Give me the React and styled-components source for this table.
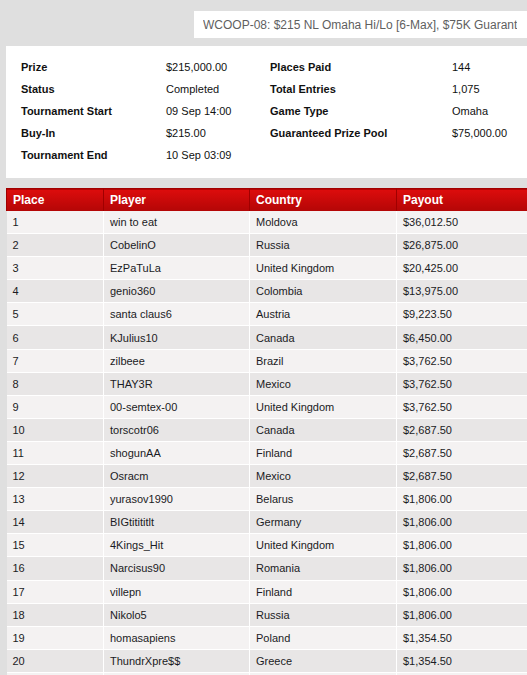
import React from "react";
import styled, { createGlobalStyle } from "styled-components";

const Global = createGlobalStyle`
  html, body { margin: 0; padding: 0; background: #dfdfdf; overflow: hidden; }
  body { font-family: "Liberation Sans", Arial, sans-serif; }
`;

const Page = styled.div`
  width: 580px;
  padding: 11px 0 0 6px;
  box-sizing: border-box;
`;

const TitleBar = styled.div`
  margin-left: 188px;
  height: 27px;
  background: #fff;
  display: flex;
  align-items: center;
  padding-left: 9px;
`;

const TitleText = styled.div`
  width: 314px;
  overflow: hidden;
  white-space: nowrap;
  font-family: "Liberation Sans", Arial, sans-serif;
  font-size: 12px;
  color: #5f5f5f;
`;

const InfoPanel = styled.div`
  margin-top: 8px;
  background: #fff;
  height: 132px;
  box-sizing: border-box;
  padding: 10px 0 0 15px;
  display: grid;
  grid-template-columns: 145px 104px 182px 1fr;
  grid-auto-rows: 22px;
  align-items: center;
`;

const Label = styled.div`
  font-size: 11px;
  font-weight: bold;
  color: #111;
  white-space: nowrap;
`;

const Value = styled.div`
  font-size: 11px;
  color: #111;
  white-space: nowrap;
`;

const Table = styled.table`
  margin-top: 10px;
  border-collapse: collapse;
  table-layout: fixed;
  width: 540px;
  font-size: 11px;
`;

const HeadRow = styled.tr`
  background: linear-gradient(#dc0c0c, #b20606);
  border-top: 1px solid #a30000;
`;

const Th = styled.th`
  height: 22px;
  padding: 0 0 0 6px;
  text-align: left;
  font-size: 12px;
  font-weight: bold;
  color: #fff;
  border-left: 1px solid #a00000;
`;

const Row = styled.tr`
  background: ${(p) => (p.$even ? "#e8e6e6" : "#f4f2f2")};
  border-bottom: 1px solid #fff;
`;

const Td = styled.td`
  height: 22.1px;
  padding: 0 0 0 6px;
  color: #1b1b24;
  white-space: nowrap;
  border-left: 1px solid #fff;
  &:first-child { border-left: none; }
`;

const info = [
  ["Prize", "$215,000.00", "Places Paid", "144"],
  ["Status", "Completed", "Total Entries", "1,075"],
  ["Tournament Start", "09 Sep 14:00", "Game Type", "Omaha"],
  ["Buy-In", "$215.00", "Guaranteed Prize Pool", "$75,000.00"],
  ["Tournament End", "10 Sep 03:09", "", ""],
];

const rows = [
  ["win to eat", "Moldova", "$36,012.50"],
  ["CobelinO", "Russia", "$26,875.00"],
  ["EzPaTuLa", "United Kingdom", "$20,425.00"],
  ["genio360", "Colombia", "$13,975.00"],
  ["santa claus6", "Austria", "$9,223.50"],
  ["KJulius10", "Canada", "$6,450.00"],
  ["zilbeee", "Brazil", "$3,762.50"],
  ["THAY3R", "Mexico", "$3,762.50"],
  ["00-semtex-00", "United Kingdom", "$3,762.50"],
  ["torscotr06", "Canada", "$2,687.50"],
  ["shogunAA", "Finland", "$2,687.50"],
  ["Osracm", "Mexico", "$2,687.50"],
  ["yurasov1990", "Belarus", "$1,806.00"],
  ["BIGtitititlt", "Germany", "$1,806.00"],
  ["4Kings_Hit", "United Kingdom", "$1,806.00"],
  ["Narcisus90", "Romania", "$1,806.00"],
  ["villepn", "Finland", "$1,806.00"],
  ["Nikolo5", "Russia", "$1,806.00"],
  ["homasapiens", "Poland", "$1,354.50"],
  ["ThundrXpre$$", "Greece", "$1,354.50"],
  ["", "", ""],
];

export default function App() {
  return (
    <>
      <Global />
      <Page>
        <TitleBar>
          <TitleText>WCOOP-08: $215 NL Omaha Hi/Lo [6-Max], $75K Guarantee</TitleText>
        </TitleBar>
        <InfoPanel>
          {info.map((r, i) => (
            <React.Fragment key={i}>
              <Label>{r[0]}</Label>
              <Value>{r[1]}</Value>
              <Label>{r[2]}</Label>
              <Value>{r[3]}</Value>
            </React.Fragment>
          ))}
        </InfoPanel>
        <Table>
          <colgroup>
            <col style={{ width: 97 }} />
            <col style={{ width: 146 }} />
            <col style={{ width: 147 }} />
            <col />
          </colgroup>
          <thead>
            <HeadRow>
              <Th>Place</Th>
              <Th>Player</Th>
              <Th>Country</Th>
              <Th>Payout</Th>
            </HeadRow>
          </thead>
          <tbody>
            {rows.map((r, i) => (
              <Row key={i} $even={i % 2 === 1}>
                <Td>{i < 20 ? i + 1 : ""}</Td>
                <Td>{r[0]}</Td>
                <Td>{r[1]}</Td>
                <Td>{r[2]}</Td>
              </Row>
            ))}
          </tbody>
        </Table>
      </Page>
    </>
  );
}
